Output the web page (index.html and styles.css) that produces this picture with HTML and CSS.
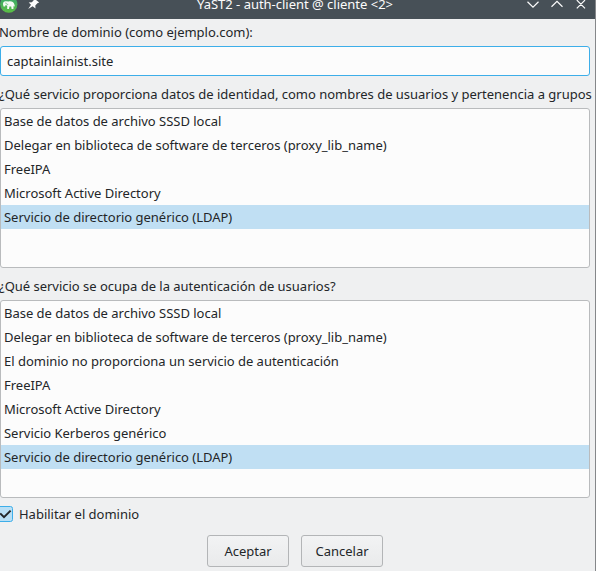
FILE: index.html
```html
<!DOCTYPE html>
<html lang="es">
<head>
<meta charset="utf-8">
<title>YaST2 - auth-client</title>
<link rel="stylesheet" href="styles.css">
</head>
<body>
<div class="window">
  <header class="titlebar">
    <svg class="title-left" width="44" height="19" viewBox="0 0 44 19">
      <defs><linearGradient id="g" x1="0" y1="0" x2="0" y2="1"><stop offset="0" stop-color="#35a56f"/><stop offset="1" stop-color="#5cbf45"/></linearGradient></defs>
      <circle cx="8.800" cy="4.200" r="8.600" fill="url(#g)"/>
      <path d="M3 4.200C3 2.400 4 1.200 5.600 1.200L8.800 1.400C11.600 1 13.800 2 14.300 4.200L14.800 6.300 14 6.500 13.600 5.500 13.400 9H11.600L11.200 6.600H9.400L9 9H7.200L7.200 5.800 5.600 5 5.100 6.600H3.500z" fill="#f4fbf5"/>
      <path d="M5.800 2.600c.3 1.500 1.300 2 2.400 1.700" fill="none" stroke="#50b66a" stroke-width=".8"/>
      <path d="M33.600-2 39.200 2.600 37.400 3.200 35.300 5.400 35.500 8.500 32.600 6.200 28.200 9 31 4.700 28.700 2.500 31.900 2.200 33.700.2z" fill="#fcfcfc"/>
    </svg>
    <span class="title">YaST2 - auth-client @ cliente &lt;2&gt;</span>
    <svg class="title-right" width="68" height="19" viewBox="0 0 68 19">
      <path d="M4.500 1.800 10 7.200 15.500 1.800M28.500 6.700 34 1.300 39.500 6.700M53.800.1l8.200 8.200M62 .1l-8.200 8.200" fill="none" stroke="#fcfcfc" stroke-width="1.200"/>
    </svg>
  </header>
  <main class="content">
    <label class="caption" for="domain">Nombre de dominio (como ejemplo.com):</label>
    <input class="field" id="domain" type="text" value="captainlainist.site">
    <div class="caption">¿Qué servicio proporciona datos de identidad, como nombres de usuarios y pertenencia a grupos</div>
    <ul class="list identity">
      <li>Base de datos de archivo SSSD local</li>
      <li>Delegar en biblioteca de software de terceros (proxy_lib_name)</li>
      <li>FreeIPA</li>
      <li>Microsoft Active Directory</li>
      <li class="selected">Servicio de directorio genérico (LDAP)</li>
    </ul>
    <div class="caption">¿Qué servicio se ocupa de la autenticación de usuarios?</div>
    <ul class="list auth">
      <li>Base de datos de archivo SSSD local</li>
      <li>Delegar en biblioteca de software de terceros (proxy_lib_name)</li>
      <li>El dominio no proporciona un servicio de autenticación</li>
      <li>FreeIPA</li>
      <li>Microsoft Active Directory</li>
      <li>Servicio Kerberos genérico</li>
      <li class="selected">Servicio de directorio genérico (LDAP)</li>
    </ul>
    <div class="enable">
      <svg width="14" height="16" viewBox="0 0 14 16">
        <rect x="-2.500" y=".5" width="15" height="15" rx="2" fill="#b9dff5" stroke="#3daee9"/>
        <path d="M.2 7.400 4 11.200 10.600 4.600" fill="none" stroke="#232629" stroke-width="2"/>
      </svg>
      <span>Habilitar el dominio</span>
    </div>
    <div class="actions">
      <button type="button">Aceptar</button>
      <button type="button">Cancelar</button>
    </div>
  </main>
</div>
</body>
</html>
```
FILE: styles.css
```css
* { box-sizing: border-box; }

body {
  margin: 0;
  overflow: hidden;
  background: #eff0f1;
  color: #232629;
  font: 13px/24px "Noto Sans", sans-serif;
  letter-spacing: -0.015px;
}

.window {
  width: 596px;
  height: 571px;
  overflow: hidden;
  border-right: 1px solid #85878a;
}

.titlebar {
  display: grid;
  grid-template-columns: 68px 1fr 68px;
  height: 19px;
  padding-right: 4px;
  background: #475057;
  color: #fcfcfc;
}

.title {
  margin-top: -8px;
  padding-right: 1px;
  text-align: center;
  white-space: nowrap;
}

.content {
  display: flex;
  flex-direction: column;
  width: 592px;
}

.caption {
  height: 32px;
  margin-left: -1px;
  line-height: 36px;
  white-space: nowrap;
}

label.caption {
  height: 27px;
  line-height: 27px;
}

.field {
  width: 590px;
  height: 30px;
  padding: 0 6px;
  border: 1px solid #3daee9;
  border-radius: 3px;
  outline: 0;
  background: #fcfcfc;
  color: inherit;
  font: inherit;
}

.list {
  width: 590px;
  margin: 0;
  padding: 0;
  border: 1px solid #b9bbbd;
  border-radius: 3px;
  background: #fcfcfc;
  list-style: none;
}

.identity { height: 160px; }
.auth { height: 198px; }

.list li {
  height: 24px;
  padding-left: 3px;
  white-space: nowrap;
}

.selected { background: #c0dff3; }

.enable {
  display: flex;
  align-items: center;
  gap: 5px;
  height: 32px;
}

.actions {
  display: flex;
  justify-content: center;
  gap: 12px;
  width: 590px;
  margin-top: 5px;
}

.actions button {
  width: 82px;
  height: 32px;
  padding: 0;
  border: 1px solid #b3b5b7;
  border-radius: 3px;
  background: linear-gradient(#f2f3f4, #e9eaeb);
  color: inherit;
  font: inherit;
}
```
